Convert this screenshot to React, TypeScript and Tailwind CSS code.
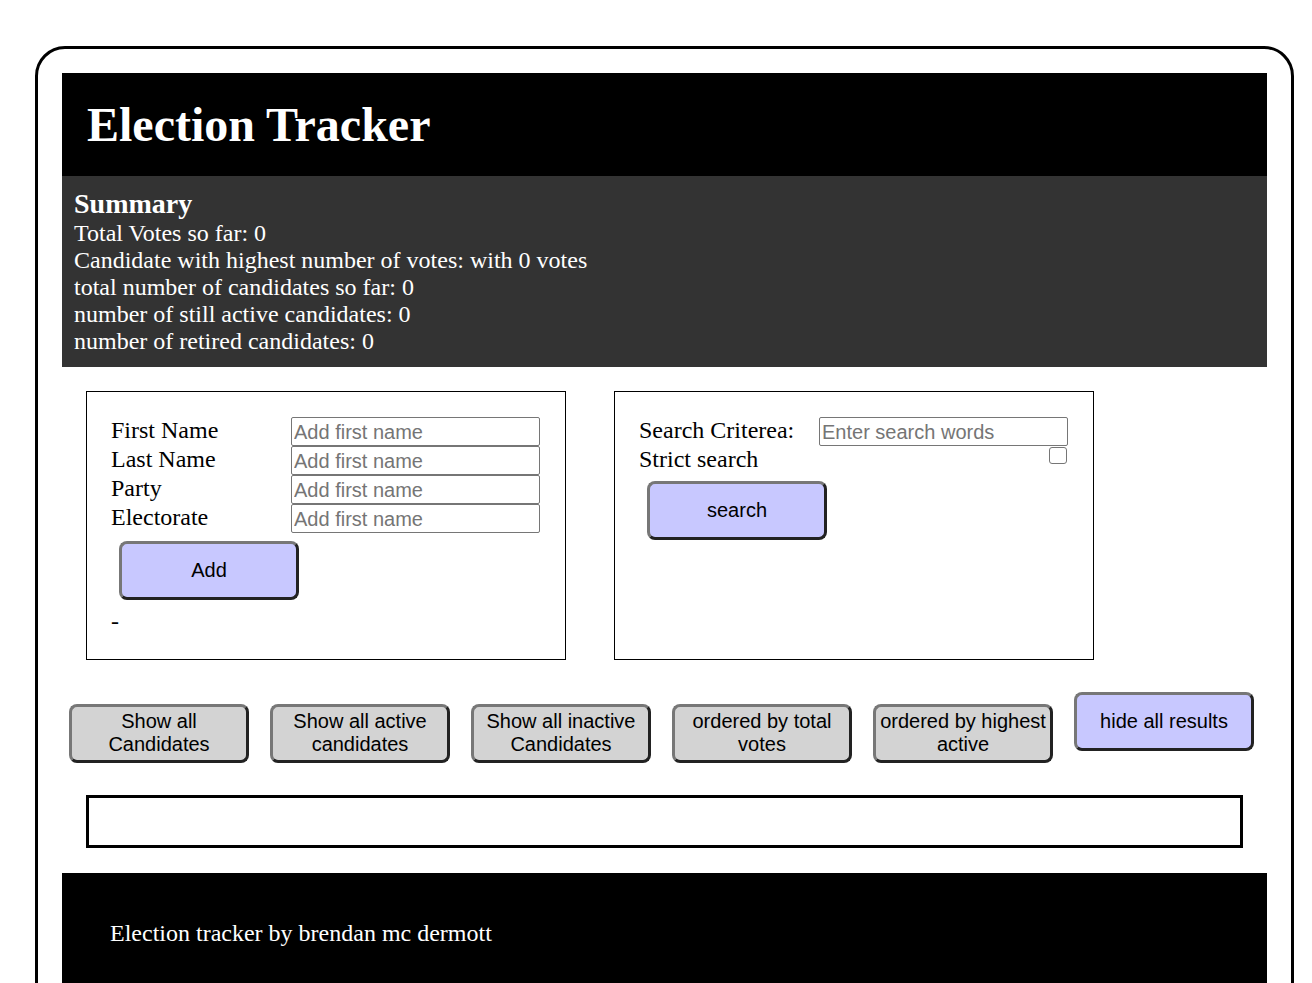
import React from 'react';

const serif = "font-['Liberation_Serif','Times_New_Roman',serif]";

const btnBase =
  "w-[180px] h-[59px] shrink-0 rounded-[8px] border-[3px] border-t-[#777] border-l-[#777] border-b-[#222] border-r-[#222] text-[20px] leading-[23px] text-black text-center font-['Liberation_Sans',Arial,sans-serif]";

const inputCls =
  "w-[249px] h-[29px] border border-[#767676] rounded-[2px] px-[2px] text-[20px] text-black placeholder:text-[#757575] outline-none font-['Liberation_Sans',Arial,sans-serif]";

function Summary() {
  return (
    <section className="bg-[#333333] px-[12px] py-[12px] text-white text-[24px] leading-[27px]">
      <h3 className="text-[28px] leading-[32px] font-bold">Summary</h3>
      <p>Total Votes so far: 0</p>
      <p>Candidate with highest number of votes: with 0 votes</p>
      <p>total number of candidates so far: 0</p>
      <p>number of still active candidates: 0</p>
      <p>number of retired candidates: 0</p>
    </section>
  );
}

function AddForm() {
  const fields = ['First Name', 'Last Name', 'Party', 'Electorate'];
  return (
    <div className="w-[480px] h-[269px] border border-black pt-[25px] pl-[24px]">
      <div className="grid grid-cols-[180px_249px]">
        {fields.map(f => (
          <React.Fragment key={f}>
            <label className="text-[24px] leading-[27px]">{f}</label>
            <input className={inputCls} placeholder="Add first name" />
          </React.Fragment>
        ))}
      </div>
      <button className={`${btnBase} bg-[#c8c8ff] ml-[8px] mt-[8px]`}>Add</button>
      <p className="mt-[8px] text-[24px] leading-[27px]">-</p>
    </div>
  );
}

function SearchForm() {
  return (
    <div className="w-[480px] h-[269px] border border-black pt-[25px] pl-[24px]">
      <div className="grid grid-cols-[180px_249px]">
        <label className="text-[24px] leading-[27px]">Search Criterea:</label>
        <input className={inputCls} placeholder="Enter search words" />
        <label className="text-[24px] leading-[27px]">Strict search</label>
        <span className="justify-self-end self-start mt-[1px] mr-[1px] w-[18px] h-[17px] rounded-[3px] border border-[#767676] bg-white" />
      </div>
      <button className={`${btnBase} bg-[#c8c8ff] ml-[8px] mt-[8px]`}>search</button>
    </div>
  );
}

export default function App() {
  const filters = [
    'Show all Candidates',
    'Show all active candidates',
    'Show all inactive Candidates',
    'ordered by total votes',
    'ordered by highest active',
  ];

  return (
    <div className={`${serif} min-h-screen bg-white pt-[46px] pl-[35px] overflow-hidden`}>
      <div className="w-[1259px] border-[3px] border-black rounded-[30px] p-[24px] pb-0">
        {/* Header */}
        <header className="bg-black h-[103px] px-[25px] flex items-center">
          <h1 className="text-white text-[48px] font-bold leading-[55px]">Election Tracker</h1>
        </header>

        <Summary />

        {/* Forms */}
        <div className="mt-[24px] pl-[24px] flex gap-[48px]">
          <AddForm />
          <SearchForm />
        </div>

        {/* Filter buttons */}
        <div className="mt-[24px] py-[8px] pl-[7px] flex items-baseline gap-[21px]">
          {filters.map(f => (
            <button key={f} className={`${btnBase} bg-[#d3d3d3] px-[2px]`}>
              {f}
            </button>
          ))}
          <button className={`${btnBase} bg-[#c8c8ff]`}>hide all results</button>
        </div>

        {/* Results */}
        <div className="mt-[24px] mx-[24px] h-[53px] border-[3px] border-black" />

        {/* Footer */}
        <footer className="mt-[25px] bg-black pt-[47px] pl-[48px] pb-[80px] text-white text-[24px] leading-[27px]">
          Election tracker by brendan mc dermott
        </footer>
      </div>
    </div>
  );
}
